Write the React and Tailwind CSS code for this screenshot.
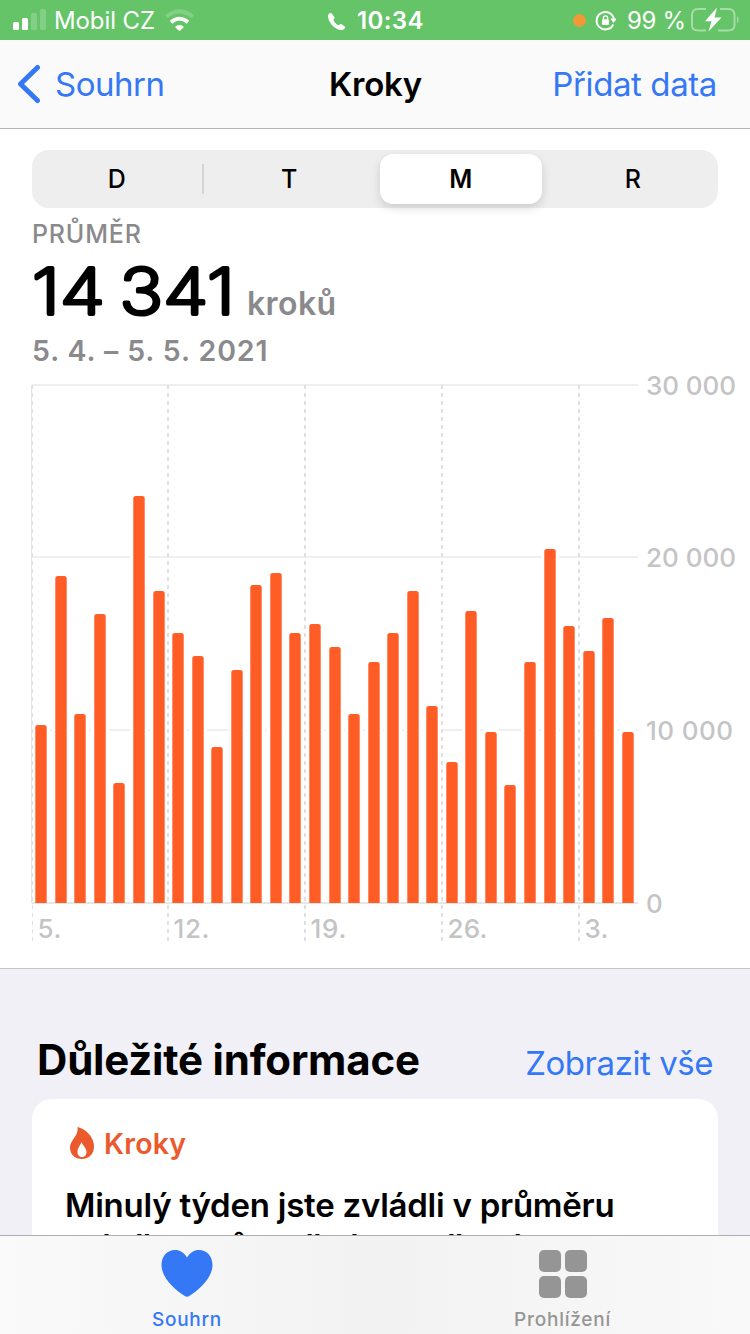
const bars = [
  [35, 725], [55, 576], [74, 714], [94, 614], [113, 783], [133, 496], [153, 591], [172, 633],
  [192, 656], [211, 747], [231, 670], [250, 585], [270, 573], [289, 633], [309, 624], [329, 647],
  [348, 714], [368, 662], [387, 633], [407, 591], [426, 706], [446, 762], [465, 611], [485, 732],
  [504, 785], [524, 662], [544, 549], [563, 626], [583, 651], [602, 618], [622, 732],
];
const gridRows = [[385, "30 000", 90], [557, "20 000", 90], [730, "10 000", 87], [903, "0", 16]];
const weeks = [[32, "5.", 24], [168, "12.", 36], [305, "19.", 36], [442, "26.", 40], [579, "3.", 24]];

function StatusBar() {
  return (
    <div className="flex h-10 shrink-0 items-center bg-[#65c368] text-white">
      <svg className="ml-3 shrink-0" width="36" height="40" viewBox="12 0 36 40" fill="#fff">
        <rect x="13" y="22" width="6" height="8" rx="1.5" />
        <rect x="22" y="18" width="6" height="12" rx="1.5" />
        <rect x="31" y="13" width="6" height="17" rx="1.5" opacity=".2" />
        <rect x="40" y="9" width="6" height="21" rx="1.5" opacity=".2" />
      </svg>
      <span className="ml-1.5 w-[104px] pt-0.5 text-[24px] leading-[38px] tracking-[-0.1px]">Mobil CZ</span>
      <svg className="ml-1.5 shrink-0" width="32" height="40" viewBox="164 0 32 40" fill="none">
        <path d="M166.300 16.800 Q179.500 6 192.700 16.800" stroke="#fff" strokeOpacity=".2" strokeWidth="4" />
        <path d="M171 22.300 Q179.500 15 188 22.300" stroke="#fff" strokeWidth="3.800" />
        <path d="M175 27 Q179.500 23 184 27 L179.500 31.200Z" fill="#fff" />
      </svg>
      <svg className="ml-[130px] shrink-0" width="22" height="40" viewBox="326 0 22 40" fill="#fff">
        <path d="M328 16 C328 13.500 330.500 12.300 331.500 13.300 L334.300 17 C335 18 334 19 333.300 20 C334 22 336.500 24.500 338.500 25.300 C339.500 24.500 340.500 23.500 341.600 24.200 L344.800 26.500 C346.200 28 343.500 30 341.500 30 C335 30 328 22.500 328 16Z" />
      </svg>
      <span className="ml-[9px] w-[80px] pt-0.5 text-[24px] font-semibold leading-[38px] tracking-[0.4px]">10:34</span>
      <div className="ml-[136px] size-[13px] rounded-full bg-[#f09a37]" />
      <svg className="ml-2 shrink-0" width="22" height="40" viewBox="594 0 22 40" fill="none">
        <path d="M613.200 24.500 A8.700 8.700 0 1 1 614 20" stroke="#fff" strokeWidth="2" />
        <path d="M610.300 18.500 H617 L613.600 23Z" fill="#fff" />
        <rect x="602" y="19.300" width="7" height="5.700" rx="1" fill="#fff" />
        <path d="M603.400 19.500 V18 a2.100 2.100 0 0 1 4.200 0 V19.500" stroke="#fff" strokeWidth="1.300" />
      </svg>
      <span className="ml-[11px] w-[63px] whitespace-nowrap pt-0.5 text-[24px] leading-[38px] tracking-[-0.3px]">99 %</span>
      <svg className="shrink-0" width="50" height="40" viewBox="690 0 50 40" fill="none">
        <path d="M706 9 H698 Q692 9 692 15 V25 Q692 30.500 698 30.500 H706 M718 30.500 H728 Q734.500 30.500 734.500 25 V15 Q734.500 9 728 9 H720" stroke="#fff" strokeOpacity=".42" strokeWidth="2" />
        <path d="M737 16 Q740.500 19.500 737 23.500Z" fill="#fff" fillOpacity=".42" />
        <path d="M717 7.500 L705 21.300 H711.500 L708.500 31.500 L721.500 17.500 H714.500Z" fill="#fff" />
      </svg>
    </div>
  );
}

function NavBar() {
  return (
    <div className="grid h-[89px] shrink-0 grid-cols-3 items-center border-b border-[#b2b2b4] bg-[#fafafa] text-[33px]">
      <div className="flex items-center text-[#3478f6]">
        <svg className="ml-[17px]" width="24" height="40" viewBox="0 0 24 40" fill="none">
          <path d="M20.500 3.500 L3.500 20 L20.500 36.500" stroke="currentColor" strokeWidth="5" strokeLinecap="round" strokeLinejoin="round" />
        </svg>
        <span className="ml-[14px] pt-0.5 tracking-[-0.5px]">Souhrn</span>
      </div>
      <div className="pl-px pt-0.5 text-center font-semibold tracking-[-0.2px]">Kroky</div>
      <div className="whitespace-nowrap pr-[33px] pt-0.5 text-right tracking-[-0.4px] text-[#3478f6]">Přidat data</div>
    </div>
  );
}

function Segments() {
  return (
    <div className="mx-8 mt-[21px] grid h-[58px] grid-cols-4 items-center rounded-[17px] bg-[#eeeeef] text-center text-[25px] font-medium leading-[30px]">
      <div className="border-r-2 border-[#d4d4d6]">D</div>
      <div>T</div>
      <div className="ml-[5px] mr-[5px] rounded-[13px] bg-white py-[10px] font-semibold shadow-[0_4px_10px_rgba(0,0,0,0.14)]">M</div>
      <div className="pl-px">R</div>
    </div>
  );
}

function Summary() {
  return (
    <div className="flex flex-col pl-8 text-[#8a8a8d]">
      <div className="mt-3 h-7 text-[25px] font-medium leading-7 tracking-[0.8px]">PRŮMĚR</div>
      <div className="flex h-[82px] items-baseline">
        <svg width="215" height="67" viewBox="32 248 215 67" className="overflow-visible">
          <text x="32" y="314" fontSize="63" fontWeight="200" fill="#000" stroke="#000" strokeWidth="3.8" strokeLinejoin="round" strokeLinecap="round" textLength="203" lengthAdjust="spacingAndGlyphs" wordSpacing="-5">14 341</text>
        </svg>
        <span className="text-[32px] font-semibold leading-10 tracking-[0.4px]">kroků</span>
      </div>
      <div className="mt-[3px] h-9 text-[28.500px] font-semibold leading-9 tracking-[0.9px]">5. 4. – 5. 5. 2021</div>
    </div>
  );
}

function Chart() {
  return (
    <svg className="mt-[5px] block shrink-0" width="750" height="594" viewBox="0 374 750 594">
      {gridRows.map(([y]) => <path key={y} d={`M32 ${y} H638`} stroke="#efeff0" strokeWidth="2" />)}
      <path d="M31.500 385 V903" stroke="#e4e4e6" strokeWidth="1" />
      {bars.map(([x, y]) => <rect key={x} x={x - 3} y={y - 3} width="18" height={906 - y - 2} rx="4" fill="#fff" />)}
      <path d="M32 903 H638" stroke="#e6e6e8" strokeWidth="2" />
      {weeks.map(([x, label, w]) => (
        <g key={x}>
          <path d={`M${x === 32 ? 32.5 : x} 385 V941`} stroke="#e0e0e2" strokeWidth={x === 32 ? 1 : 2} strokeDasharray="4 4" />
          <text x={x + 5.500} y="938" fontSize="26" fontWeight="500" fill="#c4c4c6" textLength={w}>{label}</text>
        </g>
      ))}
      {bars.map(([x, y]) => (
        <path key={x} d={`M${x + 0.3} 903 V${y + 2.5} q0 -2.500 2.500 -2.500 h6.400 q2.500 0 2.500 2.500 V903Z`} fill="#ff5c26" />
      ))}
      {gridRows.map(([y, label, w]) => (
        <text key={y} x="646" y={y + 10} fontSize="26" fontWeight="500" fill="#c4c4c6" textLength={w}>{label}</text>
      ))}
    </svg>
  );
}

function Highlights() {
  return (
    <div className="min-h-0 flex-1 overflow-hidden border-t border-[#c5c5c9] bg-[#f1f0f6]">
      <div className="flex h-[116px] pl-[37px] pr-[37px] pt-[66px]">
        <div className="flex-1 whitespace-nowrap text-[42px] font-bold leading-[50px] tracking-[-0.2px]">Důležité informace</div>
        <div className="whitespace-nowrap pt-[3px] text-[33px] leading-[50px] tracking-[-0.45px] text-[#3478f6]">Zobrazit vše</div>
      </div>
      <div className="mx-8 mt-[14px] rounded-[20px] bg-white px-[33px] pt-[26px]">
        <div className="flex h-9 items-center text-[28.500px] font-semibold tracking-[0.2px] text-[#eb5a2c]">
          <svg className="ml-1 mr-[9px]" width="26" height="34" viewBox="0 0 26 34">
            <path fillRule="evenodd" fill="currentColor" d="M8.500 1 C17 3 25 11 25 20.500 C25 28 20 33 13 33 C6 33 1 28.500 1 21.500 C1 14 10 10 8.500 1Z M12.500 16 C11 20 8.500 22 8.500 26 C8.500 29 10.500 31 13 31 C15.500 31 17.500 29 17.500 26 C17.500 22 14 20 12.500 16Z" />
          </svg>
          <span className="pt-0.5">Kroky</span>
        </div>
        <div className="mt-[23px] whitespace-nowrap text-[33px] font-semibold leading-[43px] tracking-[-0.24px]">
          <div>Minulý týden jste zvládli v průměru</div>
          <div className="-mt-px tracking-[-0.4px]">méně kroků, než týden předtím</div>
        </div>
      </div>
    </div>
  );
}

function TabBar() {
  return (
    <div className="grid h-[99px] shrink-0 grid-cols-2 border-t border-[#aeaeb2] bg-linear-to-r from-[#fafafa] via-[#f2f2f2] to-[#f9f9f9] text-[19px] font-medium leading-6 tracking-[0.75px]">
      <div className="flex flex-col items-center pr-px pt-[14px] text-[#3478f6]">
        <svg width="52" height="48" viewBox="0 0 52 48" fill="currentColor">
          <path d="M26 7.500 C29 2.500 33 0 38 0 C46 0 51.500 6.500 51.500 15 C51.500 29 36 41 28.500 45.800 Q26 47.500 23.500 45.800 C16 41 .5 29 .5 15 C.5 6.500 6 0 14 0 C19 0 23 2.500 26 7.500Z" />
        </svg>
        <span className="mt-[10px]">Souhrn</span>
      </div>
      <div className="flex flex-col items-center pt-[14px] text-[#959595]">
        <svg width="48" height="48" viewBox="0 0 48 48" fill="currentColor">
          <rect width="22" height="22" rx="5" /><rect x="26" width="22" height="22" rx="5" />
          <rect y="26" width="22" height="22" rx="5" /><rect x="26" y="26" width="22" height="22" rx="5" />
        </svg>
        <span className="mt-[10px]">Prohlížení</span>
      </div>
    </div>
  );
}

export default function App() {
  return (
    <div className="flex h-[1334px] w-[750px] flex-col overflow-hidden bg-white font-['Inter','Liberation_Sans',sans-serif] text-black">
      <StatusBar />
      <NavBar />
      <Segments />
      <Summary />
      <Chart />
      <Highlights />
      <TabBar />
    </div>
  );
}
